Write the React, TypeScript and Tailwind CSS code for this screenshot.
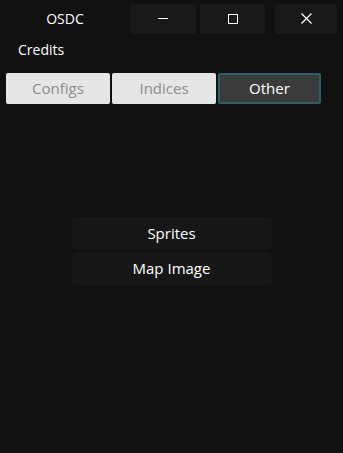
export default function App() {
  return (
    <div
      className="w-[343px] h-[453px] bg-[#111111] text-white overflow-hidden flex flex-col"
      style={{ fontFamily: '"Open Sans", "Noto Sans", sans-serif' }}
    >
      {/* title bar */}
      <div className="flex items-center pt-[3px] h-[34px]">
        <div className="w-[130px] text-center text-[14px] leading-none">OSDC</div>
        <div className="w-[66px] h-[30px] bg-[#191919] rounded-[3px] flex items-center justify-center">
          <div className="w-[10px] h-[1.5px] bg-white" />
        </div>
        <div className="w-[65px] h-[30px] ml-[4px] bg-[#191919] rounded-[3px] flex items-center justify-center">
          <div className="w-[10px] h-[10px] border border-white" />
        </div>
        <div className="w-[62px] h-[30px] ml-[10px] bg-[#191919] rounded-[3px] flex items-center justify-center">
          <svg width="11" height="11" viewBox="0 0 11 11" stroke="white" strokeWidth="1.2">
            <path d="M0.5 0.5 L10.5 10.5 M10.5 0.5 L0.5 10.5" />
          </svg>
        </div>
      </div>

      {/* menu */}
      <div className="pl-[18px] mt-[6px] h-[24px] text-[14px] leading-[20px]">Credits</div>

      {/* tabs */}
      <div className="flex pl-[6px] mt-[9px] gap-[2px]">
        <button className="w-[104px] h-[31px] bg-[#e6e6e6] text-[#8c8c8c] text-[15px] rounded-[2px]">
          Configs
        </button>
        <button className="w-[104px] h-[31px] bg-[#e6e6e6] text-[#8c8c8c] text-[15px] rounded-[2px]">
          Indices
        </button>
        <button className="w-[103px] h-[31px] bg-[#3b3b3b] text-white text-[15px] border-2 border-[#2a5f6c] rounded-[2px]">
          Other
        </button>
      </div>

      {/* actions */}
      <div className="flex flex-col items-center mt-[113px] gap-[3px]">
        <button className="w-[200px] h-[32px] bg-[#171717] rounded-[4px] text-[15px]">Sprites</button>
        <button className="w-[200px] h-[33px] bg-[#171717] rounded-[4px] text-[15px]">Map Image</button>
      </div>
    </div>
  );
}
